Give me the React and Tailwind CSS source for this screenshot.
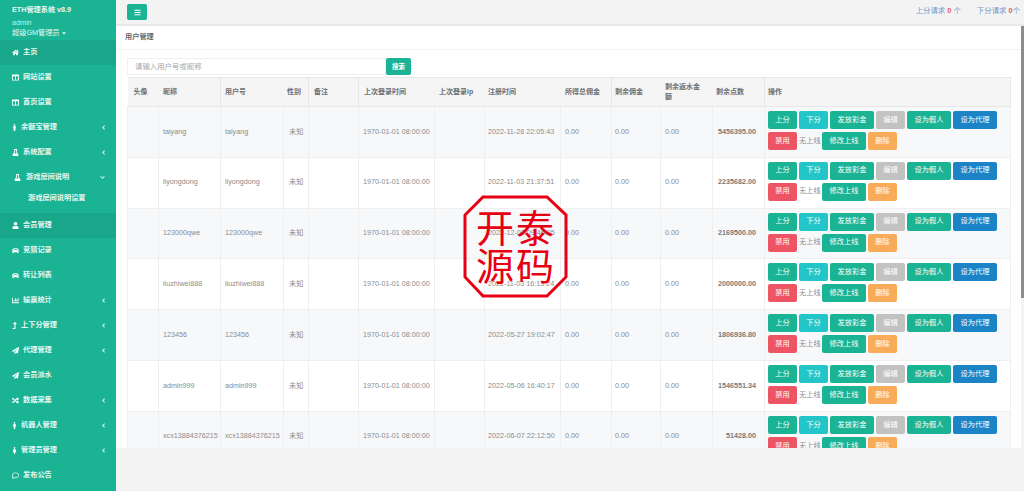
import React from "react";
import { FaHome, FaColumns, FaMale, FaFemale, FaFlask, FaUser, FaCar, FaChartBar, FaLevelUpAlt, FaPaperPlane, FaRandom, FaRegComment, FaBars, FaAngleLeft, FaAngleDown, FaCaretDown } from "react-icons/fa";

const widths = [31, 62, 63, 25, 50, 76, 50, 76, 51, 49, 52, 52, 246];
const heads = [
  ["头像", "border-r-transparent pl-[6px]"],
  ["昵称", "border-r-[#e7e7e7] pl-[4px]"],
  ["用户号", "border-r-transparent pl-[4px]"],
  ["性别", "border-r-[#e7e7e7] pl-[3px]"],
  ["备注", "border-r-[#e7e7e7] pl-[5px]"],
  ["上次登录时间", "border-r-transparent pl-[5px]"],
  ["上次登录ip", "border-r-transparent pl-[4px]"],
  ["注册时间", "border-r-transparent pl-[3px]"],
  ["所得总佣金", "border-r-[#e7e7e7] pl-[4px]"],
  ["剩余佣金", "border-r-transparent pl-[3px]"],
  ["剩余返水金额", "border-r-transparent pl-[4px] pr-[8px]"],
  ["剩余点数", "border-r-[#e7e7e7] pl-[3px]"],
  ["操作", "border-r-[#e7e7e7] pl-[3px]"],
];
const rows = [
  ["taiyang", "2022-11-28 22:05:43", "5456395.00"],
  ["liyongdong", "2022-11-03 21:37:51", "2235682.00"],
  ["123000qwe", "2022-12-02 09:46:05", "2169500.00"],
  ["liuzhiwei888", "2022-11-03 16:13:24", "2000000.00"],
  ["123456", "2022-05-27 19:02:47", "1806936.80"],
  ["admin999", "2022-05-06 16:40:17", "1546551.34"],
  ["xcx13884376215", "2022-06-07 22:12:50", "51428.00"],
];

const menu = [
  { t: "主页", I: FaHome, active: true },
  { t: "网站设置", I: FaColumns },
  { t: "首页设置", I: FaColumns },
  { t: "余额宝管理", I: FaMale, arrow: true, narrow: true },
  { t: "系统配置", I: FaFlask, arrow: true },
];
const menu2 = [
  { t: "会员管理", I: FaUser, active: true },
  { t: "竞猜记录", I: FaCar },
  { t: "转让列表", I: FaCar },
  { t: "输赢统计", I: FaChartBar, arrow: true },
  { t: "上下分管理", I: FaLevelUpAlt, arrow: true, narrow: true },
  { t: "代理管理", I: FaPaperPlane, arrow: true },
  { t: "会员派水", I: FaPaperPlane },
  { t: "数据采集", I: FaRandom, arrow: true },
  { t: "机器人管理", I: FaMale, arrow: true, narrow: true },
  { t: "管理员管理", I: FaFemale, arrow: true, narrow: true },
  { t: "发布公告", I: FaRegComment },
];

function NavItem({ t, I, active, arrow, narrow }) {
  return (
    <div className={`h-[25px] flex items-center pl-3 pr-[9px] font-semibold text-[7.2px] text-[#e6f7f3] ${active ? "bg-[#18a78a]" : ""}`}>
      <I className={`text-[7px] text-white shrink-0 ${narrow ? "mr-[4px] w-[5px]" : "mr-[4px] w-[7px]"}`} />
      <span className="flex-1">{t}</span>
      {arrow && <FaAngleLeft className="text-[7px] text-[#cfeee7]" />}
    </div>
  );
}

function Btn({ c, w, children }) {
  return (
    <span className={`inline-flex items-center justify-center h-[18px] rounded-[2px] text-white text-[7.2px] ${c} ${w}`}>{children}</span>
  );
}

const td = "border border-[#efefef] text-[#8a8c8e] whitespace-nowrap";

export default function App() {
  return (
    <div className="relative flex w-[1024px] h-[491px] overflow-hidden bg-[#f3f3f4] font-['Liberation_Sans','Noto_Sans_CJK_SC',sans-serif] text-[#676a6c] text-[7.2px]">
      <aside className="w-[116px] shrink-0 bg-[#1ab394] text-white">
        <div className="h-[40px] pl-3 pt-[5px] leading-[9px]">
          <div className="font-semibold text-[#e6f7f3] h-[13px]">ETH管理系统 v8.9</div>
          <div className="text-[#c8efe6] h-[10px]">admin</div>
          <div className="flex items-center text-[#e6f7f3]">超级GM管理员<FaCaretDown className="text-[6px] ml-[1px]" /></div>
        </div>
        {menu.map((m) => <NavItem key={m.t} {...m} />)}
        <div className="h-[48px]">
          <div className="h-[25px] flex items-center pl-[14px] pr-[10px] font-semibold text-[#e6f7f3]">
            <FaFlask className="text-[7px] w-[7px] text-white mr-[5px]" />
            <span className="flex-1">游戏房间说明</span>
            <FaAngleDown className="text-[7px] text-[#cfeee7]" />
          </div>
          <div className="pl-[28px] font-semibold text-[#e6f7f3] leading-[16px]">游戏房间说明设置</div>
        </div>
        {menu2.map((m) => <NavItem key={m.t} {...m} />)}
      </aside>

      <main className="flex-1 min-w-0 flex flex-col">
        <header className="h-[26px] shrink-0 flex items-start justify-between border-b-2 border-[#e7eaec] pl-[11px] pt-1 pr-[4px]">
          <button className="w-[20px] h-[16px] rounded-[2px] bg-[#1ab394] flex items-center justify-center text-white">
            <FaBars className="text-[7px]" />
          </button>
          <div className="flex gap-4 text-[#6f97c4] mt-[2px] leading-[9px] text-[7.4px]">
            <span>上分请求 <b className="text-[#ed5565]">0</b> 个</span>
            <span>下分请求 <b className="text-[#ed5565]">0</b>个</span>
          </div>
        </header>

        <section className="h-[422px] shrink-0 bg-white overflow-hidden mr-[3px]">
          <div className="h-[24px] flex items-center pl-[9px] border-b border-[#f2f3f4] font-bold">用户管理</div>
          <div className="pl-[11px] pr-[11px] pt-2">
            <div className="flex h-[17px]">
              <div className="w-[259px] border border-[#eef0f1] flex items-center pl-[7px] text-[#a5a7a9] text-[7.4px]">请输入用户号或昵称</div>
              <button className="w-[25px] bg-[#1ab394] rounded-[2px] text-white text-[6.5px] font-semibold">搜索</button>
            </div>
            <table className="mt-[2px] table-fixed border-collapse w-[883px]">
              <colgroup>
                {widths.map((w, i) => <col key={i} style={{ width: w }} />)}
              </colgroup>
              <thead>
                <tr className="h-[29px] bg-[#f5f5f6]">
                  {heads.map(([h, b]) => (
                    <th key={h} className={`border-y border-y-[#e7e7e7] border-r text-left font-bold text-[7px] leading-[10px] text-[#6d6f71] ${b}`}>{h}</th>
                  ))}
                </tr>
              </thead>
              <tbody>
                {rows.map((r, i) => (
                  <tr key={r[0]} className={`h-[50.83px] ${i % 2 === 0 ? "bg-[#f7f8fa]" : "bg-white"}`}>
                    <td className="border border-[#efefef]"></td>
                    <td className={`${td} pl-[4px]`}>{r[0]}</td>
                    <td className={`${td} pl-[4px]`}>{r[0]}</td>
                    <td className={`${td} pl-[5px]`}>未知</td>
                    <td className="border border-[#efefef]"></td>
                    <td className={`${td} pl-[4px]`}>1970-01-01 08:00:00</td>
                    <td className="border border-[#efefef]"></td>
                    <td className={`${td} pl-[3px]`}>{r[1]}</td>
                    <td className={`${td} pl-[4px]`}>0.00</td>
                    <td className={`${td} pl-[3px]`}>0.00</td>
                    <td className={`${td} pl-[4px]`}>0.00</td>
                    <td className="border border-[#efefef] pr-[8px] text-right font-bold text-[#777a7c]">{r[2]}</td>
                    <td className="border border-[#efefef] pl-[3px] pt-[4px] align-top">
                      <div className="flex flex-wrap gap-x-[2px] gap-y-[3px] items-center">
                        <Btn c="bg-[#1ab394]" w="w-[29px]">上分</Btn>
                        <Btn c="bg-[#23c6c8]" w="w-[29px]">下分</Btn>
                        <Btn c="bg-[#1ab394]" w="w-[44px]">发放彩金</Btn>
                        <Btn c="bg-[#c2c2c2]" w="w-[29px]">编辑</Btn>
                        <Btn c="bg-[#1ab394]" w="w-[44px]">设为假人</Btn>
                        <Btn c="bg-[#1c84c6]" w="w-[44px]">设为代理</Btn>
                        <Btn c="bg-[#ed5565]" w="w-[29px]">禁用</Btn>
                        <span className="w-[21px] text-[#8a8c8e] whitespace-nowrap">无上线</span>
                        <Btn c="bg-[#1ab394]" w="w-[44px]">修改上线</Btn>
                        <Btn c="bg-[#f8ac59]" w="w-[29px]">删除</Btn>
                      </div>
                    </td>
                  </tr>
                ))}
              </tbody>
            </table>
          </div>
        </section>
      </main>

      <div className="absolute right-0 top-[26px] w-[3px] h-[272px] bg-[#8c8c8c]" />

      <div className="absolute left-[463px] top-[195px] w-[105px] h-[103px]">
        <svg viewBox="0 0 105 103" className="absolute inset-0 w-full h-full">
          <polygon points="20,2 84,2 103,20 103,82 84,101 20,101 2,82 2,20" fill="none" stroke="#e60012" strokeWidth="3" />
        </svg>
        <div className="absolute left-[12px] top-[12px] grid grid-cols-[40px_40px] auto-rows-[38px] font-['Noto_Sans_CJK_SC',sans-serif] text-[38px] leading-[38px] font-normal text-[#e60012] text-center">
          <span>开</span><span>泰</span><span>源</span><span>码</span>
        </div>
      </div>
    </div>
  );
}
